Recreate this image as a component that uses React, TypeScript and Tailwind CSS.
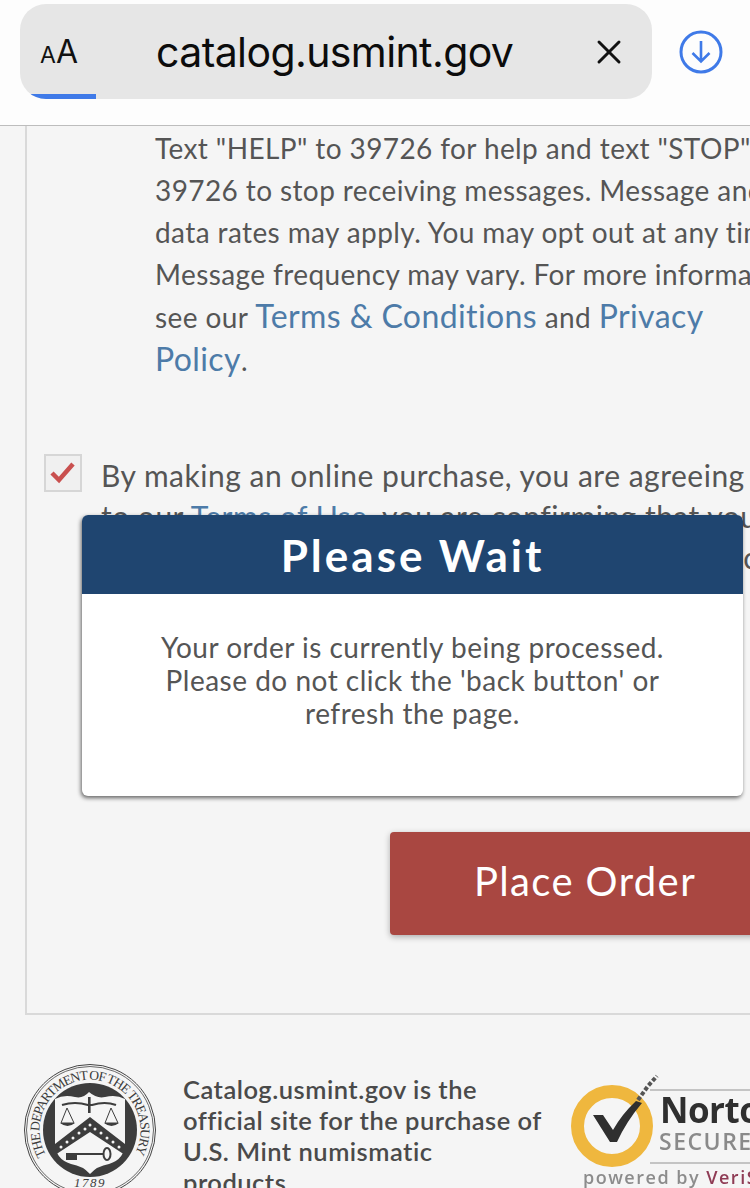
import { X } from 'lucide-react';

const bodyFont = "font-['Lato','Open_Sans',sans-serif]";

const chevronStars = [
    [38, 84], [44, 79], [50, 75], [56, 70], [62, 66], [67, 62], [72, 66], [78, 70], [84, 75], [90, 79], [96, 84],
];

function Seal() {
    return (
        <svg width="134" height="134" viewBox="0 0 134 134" className="shrink-0 block">
            <defs>
                <path id="sealTop" d="M 23 92 A 50.5 50.5 0 1 1 111 92" />
            </defs>
            <circle cx="67" cy="67" r="65.5" fill="none" stroke="#444" strokeWidth="1" />
            <circle cx="67" cy="67" r="63.5" fill="none" stroke="#444" strokeWidth="0.8" />
            <circle cx="67" cy="67" r="47" fill="#3d3d3d" />
            <text fontFamily="'Liberation Serif', serif" fontSize="13.5" fill="#3c3c3c">
                <textPath href="#sealTop" textLength="208" lengthAdjust="spacing">
                    THE DEPARTMENT OF THE TREASURY
                </textPath>
            </text>
            <text x="67" y="124" textAnchor="middle" fontFamily="'Liberation Serif', serif" fontStyle="italic" fontSize="13" letterSpacing="1.5" fill="#3c3c3c">
                1789
            </text>
            {/* shield */}
            <path d="M32 36 Q41 31 52 34 Q60 36 66 29 Q74 36 82 34 Q93 31 102 36 L102 80 Q102 96 86 101 Q74 103 67 111 Q60 103 48 101 Q32 96 32 80 Z" fill="#f5f5f5" />
            {/* scales */}
            <path d="M39 42 Q52 38 65 42 L69 42 Q82 38 93 42" fill="none" stroke="#3d3d3d" strokeWidth="2.2" />
            <rect x="65" y="34" width="2.6" height="16" fill="#3d3d3d" />
            <path d="M44 45 L38 60 H51 Z M88 45 L82 60 H95 Z" fill="none" stroke="#3d3d3d" strokeWidth="1" />
            <path d="M37 60 Q44.5 66 52 60 Z M81 60 Q88.5 66 96 60 Z" fill="#3d3d3d" />
            {/* chevron */}
            <path d="M32 81 L67 54 L102 81 L102 92 L67 69 L32 92 Z" fill="#3d3d3d" />
            <g fill="#f5f5f5">
                {chevronStars.map(([cx, cy]) => (
                    <circle key={cx} cx={cx} cy={cy} r="1.5" />
                ))}
            </g>
            {/* key */}
            <path d="M46 91 H80" stroke="#3d3d3d" strokeWidth="2" />
            <rect x="43" y="90" width="11" height="7" fill="#3d3d3d" />
            <ellipse cx="84" cy="91" rx="3.5" ry="6" fill="none" stroke="#3d3d3d" strokeWidth="2" />
        </svg>
    );
}

function NortonBadge() {
    return (
        <div className="relative w-[180px] h-[114px] shrink-0">
            <div className="absolute left-[80px] top-[15px] w-[140px] h-[75px] border-y-2 border-[#c4c4c4] blur-[0.5px]" />
            <svg width="100" height="94" viewBox="0 0 100 94" className="absolute left-0 top-0 blur-[0.5px]">
                <circle cx="42" cy="52" r="34.5" fill="none" stroke="#efb73e" strokeWidth="13" />
                <path d="M23 41 L33 41 L43 56 Q52 40 66 27 L72 29 Q56 48 47 68 L40 68 Z" fill="#2f2f2f" />
                <path d="M68 26 L78 12 L87 2" fill="none" stroke="#555" strokeWidth="4" strokeDasharray="4 2" />
            </svg>
            <p className="absolute left-[90px] top-[15px] font-['Open_Sans',sans-serif] font-bold text-[35px] leading-[42px] tracking-[-0.5px] text-[#2f2f2f] blur-[0.4px]">
                Norton
            </p>
            <p className="absolute left-[89px] top-[54px] font-['Open_Sans',sans-serif] font-semibold text-[23px] leading-[26px] tracking-[1.5px] text-[#8a8a8a] blur-[0.4px]">
                SECURED
            </p>
            <p className="absolute left-[13px] top-[91px] whitespace-nowrap font-['Open_Sans',sans-serif] font-semibold text-[18px] leading-[24px] tracking-[1.5px] text-[#8c8c8c] blur-[0.4px]">
                powered by <span className="text-[#8f3c55]">VeriSign</span>
            </p>
        </div>
    );
}

export default function App() {
    return (
        <div className={`relative w-[750px] h-[1188px] overflow-hidden bg-[#f5f5f5] ${bodyFont}`}>
            {/* Browser bar */}
            <header className="h-[126px] bg-[#fdfdfd] border-b border-[#bdbdbd] pl-5 pt-1 flex items-start font-['Inter',sans-serif]">
                <div className="relative w-[632px] h-[95px] rounded-[26px] bg-[#e6e6e6] overflow-hidden flex items-center">
                    <span className="ml-5 w-[40px] shrink-0 text-[#111] leading-none whitespace-nowrap">
                        <span className="text-[23px]">A</span>
                        <span className="text-[32px]">A</span>
                    </span>
                    <span className="ml-[76px] pt-[2px] text-[41px] tracking-[-0.6px] text-[#0c0c0c]">catalog.usmint.gov</span>
                    <X className="absolute left-[569px] top-[28px] text-[#111]" size={40} strokeWidth={1.8} />
                    <div className="absolute left-0 bottom-0 w-[76px] h-[5px] bg-[#3f7ae8]" />
                </div>
                <svg width="44" height="44" viewBox="0 0 44 44" className="ml-[27px] mt-[26px]" fill="none" stroke="#3f7ae8">
                    <circle cx="22" cy="22" r="20" strokeWidth="3" />
                    <path d="M22 11 V31 M13.5 23 L22 31.5 L30.5 23" strokeWidth="2.6" />
                </svg>
            </header>

            {/* Checkout panel */}
            <main className="ml-[25px] w-[800px] h-[889px] border-l-2 border-b-2 border-[#d9d9d9] text-[#555555] whitespace-nowrap">
                <div className="pl-[128px] pt-[1px] text-[28px] leading-[42px] tracking-[0.4px]">
                    <p>Text "HELP" to 39726 for help and text "STOP" to</p>
                    <p>39726 to stop receiving messages. Message and</p>
                    <p>data rates may apply. You may opt out at any time.</p>
                    <p>Message frequency may vary. For more information,</p>
                    <p>
                        see our <span className="text-[32px] text-[#4d7ba8]">Terms &amp; Conditions</span> and{' '}
                        <span className="text-[32px] text-[#4d7ba8]">Privacy</span>
                    </p>
                    <p>
                        <span className="text-[32px] text-[#4d7ba8]">Policy</span>.
                    </p>
                </div>

                <div className="mt-[72px] ml-[17px] flex items-start gap-[19px] h-[379px]">
                    <div className="mt-[1px] w-[38px] h-[38px] shrink-0 border-2 border-[#d6d6d6] bg-[#f0f0f0] flex items-center justify-center">
                        <svg width="28" height="24" viewBox="0 0 28 24" fill="none" stroke="#c9504f" strokeWidth="4.5">
                            <path d="M3 12 L10 19 L24 3" />
                        </svg>
                    </div>
                    <div className="pt-[2px] text-[30px] leading-[41px] tracking-[0.5px]">
                        <p>By making an online purchase, you are agreeing to</p>
                        <p>
                            to our <span className="text-[#4d7ba8]">Terms of Use</span>, you are confirming that you
                        </p>
                        <p>are at least 18 years of age, and that you agree completely</p>
                    </div>
                </div>

                <div className="ml-[363px] w-[390px] h-[103px] pb-[6px] rounded-[4px] bg-[#a94741] shadow-[0_2px_6px_rgba(0,0,0,0.3)] flex items-center justify-center text-white text-[40px] tracking-[1.4px]">
                    Place Order
                </div>
            </main>

            {/* Footer */}
            <footer className="flex items-start pl-[23px] pt-[48px]">
                <Seal />
                <div className="ml-[26px] w-[370px] text-[25.5px] leading-[31px] tracking-[0.5px] font-semibold text-[#4a4a4a] pt-[11px]">
                    <p>Catalog.usmint.gov is the</p>
                    <p>official site for the purchase of</p>
                    <p>U.S. Mint numismatic</p>
                    <p>products.</p>
                </div>
            </footer>
            <div className="absolute left-[570px] top-[1074px]">
                <NortonBadge />
            </div>

            {/* Please wait dialog */}
            <div className="absolute left-[82px] top-[515px] w-[661px] h-[281px] rounded-[6px] bg-white overflow-hidden shadow-[-1px_2px_4px_rgba(0,0,0,0.6)]">
                <div className="h-[79px] bg-[#1f4570] flex items-center justify-center text-white text-[44px] font-bold tracking-[3px]">
                    Please Wait
                </div>
                <div className="pt-[37px] text-center text-[28px] leading-[33px] tracking-[0.5px] text-[#555555]">
                    <p>Your order is currently being processed.</p>
                    <p>Please do not click the 'back button' or</p>
                    <p>refresh the page.</p>
                </div>
            </div>
        </div>
    );
}
